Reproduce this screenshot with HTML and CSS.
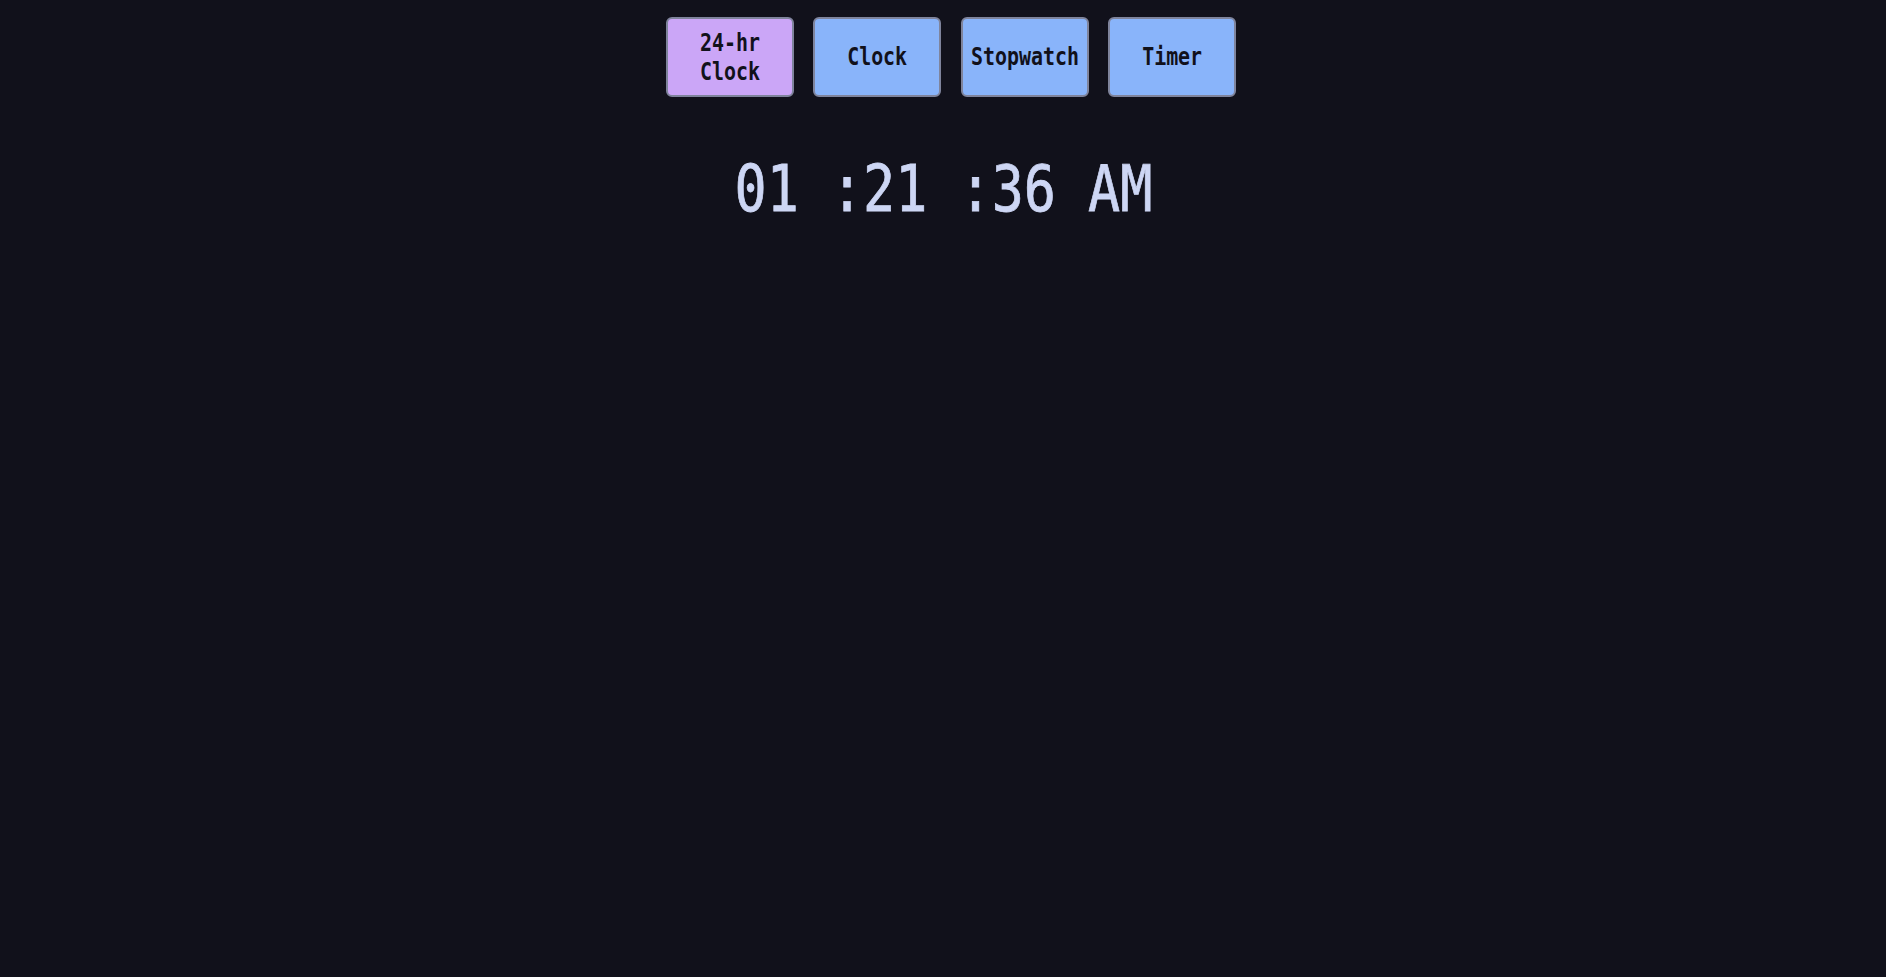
FILE: index.html
```html
<!DOCTYPE html>
<html lang="en">
<head>
<meta charset="utf-8">
<title>Clock</title>
<link rel="stylesheet" href="styles.css">
</head>
<body>
  <nav class="tabs">
    <button class="tab tab-active"><span class="tab-label">24-hr Clock</span></button>
    <button class="tab"><span class="tab-label">Clock</span></button>
    <button class="tab"><span class="tab-label">Stopwatch</span></button>
    <button class="tab"><span class="tab-label">Timer</span></button>
  </nav>
  <main class="display">
    <div class="time"><span class="time-text">01 :21 :36 AM</span></div>
  </main>
</body>
</html>
```

FILE: styles.css
```css
html, body {
  margin: 0;
  padding: 0;
  background: #11111b;
  height: 100%;
}

body {
  font-family: "DejaVu Sans Mono", monospace;
}

.tabs {
  display: flex;
  justify-content: center;
  gap: 19.3px;
  padding: 17px 0 0 16px;
}

.tab {
  box-sizing: border-box;
  width: 128px;
  height: 80px;
  padding: 1px 0 0 0;
  margin: 0;
  border: 2px solid #7f849c;
  border-radius: 6px;
  background: #89b4fa;
  color: #11111b;
  font-family: "DejaVu Sans Mono", monospace;
  font-weight: bold;
  font-size: 24px;
  line-height: 29px;
  display: flex;
  align-items: center;
  justify-content: center;
  cursor: pointer;
}

.tab-active {
  background: #cba6f7;
}

.tab-label {
  display: inline-block;
  text-align: center;
  transform: scaleX(0.83);
  white-space: normal;
}

.display {
  display: flex;
  justify-content: center;
  margin-top: 54px;
}

.time {
  font-size: 64px;
  line-height: 76px;
  color: #cdd6f4;
  white-space: pre;
  -webkit-text-stroke: 0.8px #cdd6f4;
}

.time-text {
  display: inline-block;
  transform: scaleX(0.834);
}
```
